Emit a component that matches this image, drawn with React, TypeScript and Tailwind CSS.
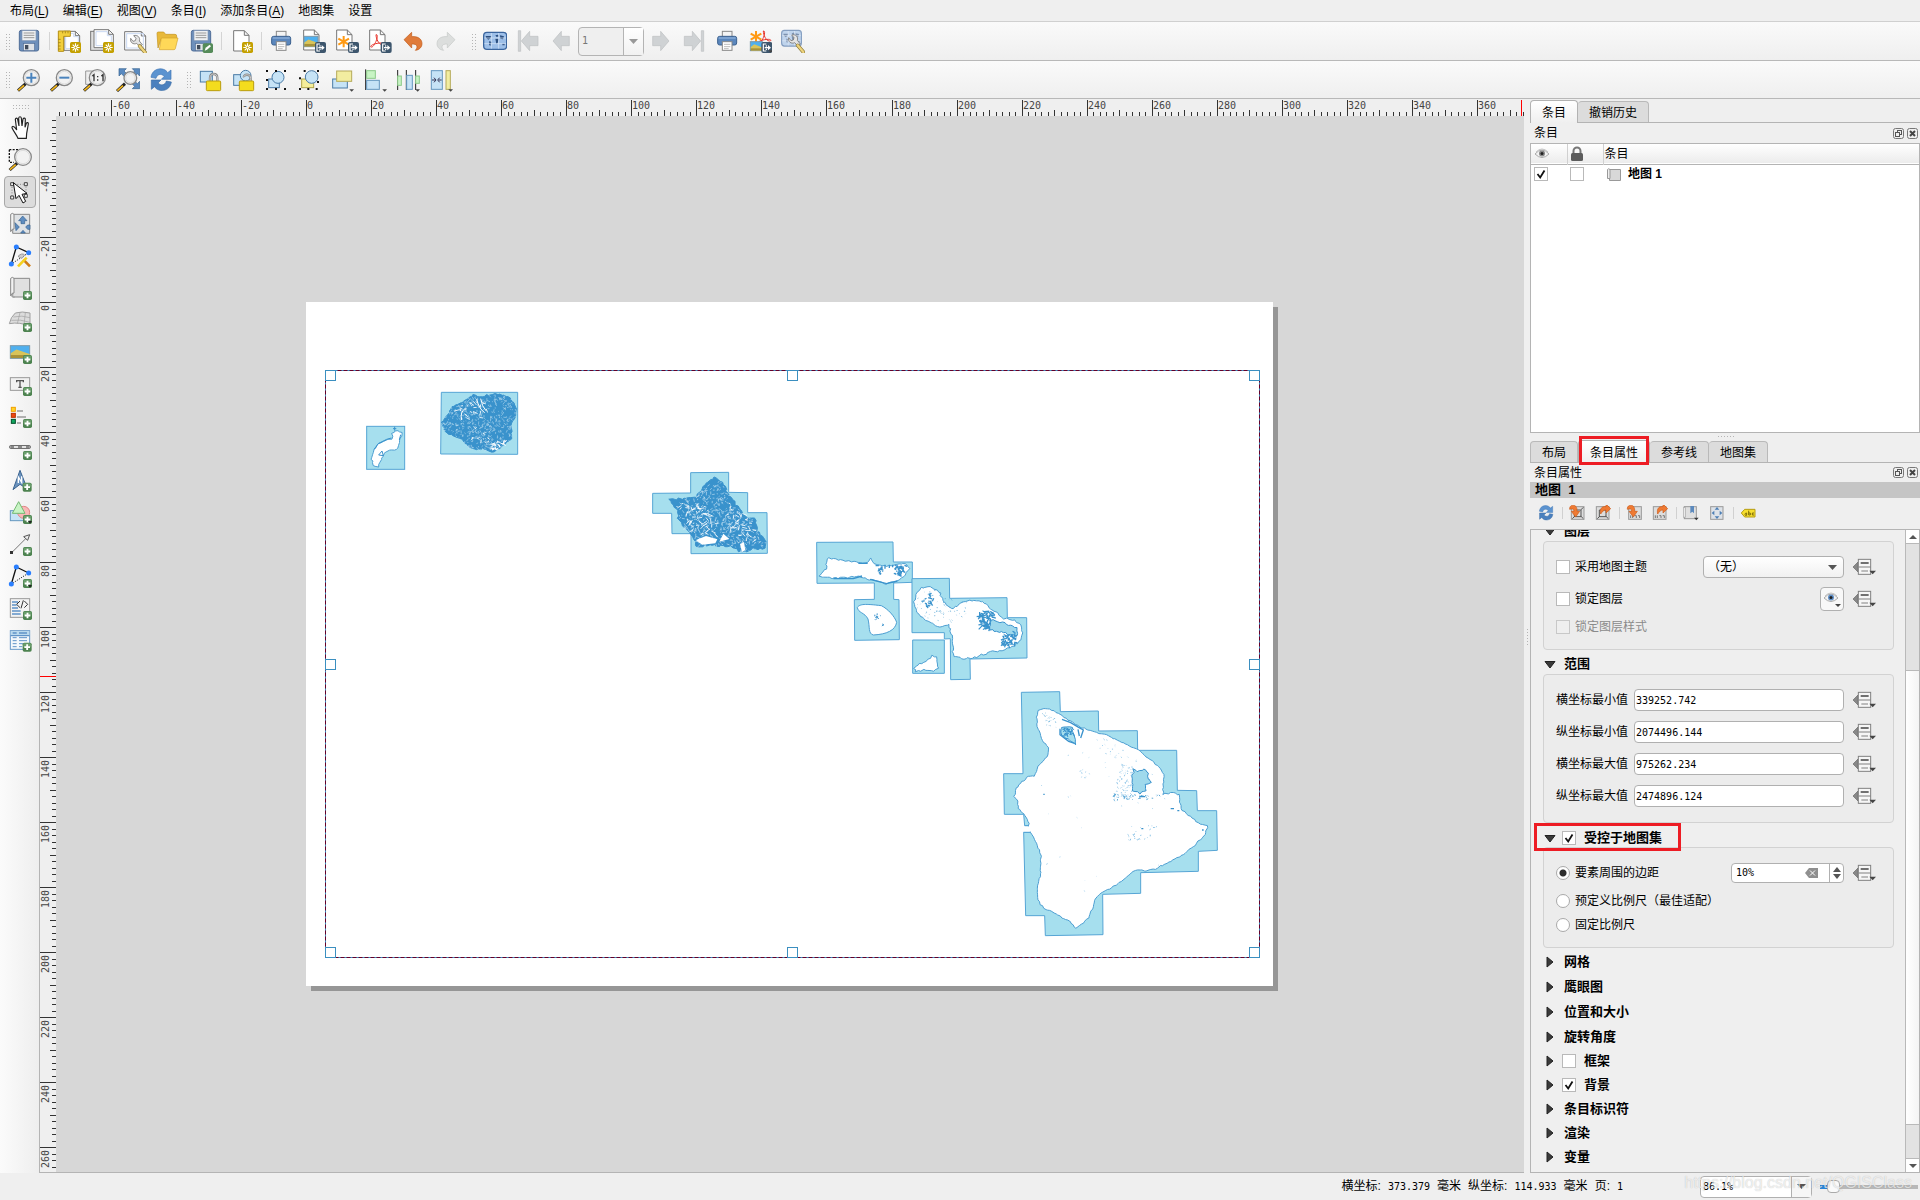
import React from 'react';

type Pt = [number, number];

/* ---------- helpers ---------- */

function makeRandom(seed: number) {
  let s = seed;
  return () => {
    s = (s * 1664525 + 1013904223) % 4294967296;
    return s / 4294967296;
  };
}

function parse(points: string): Pt[] {
  return points.trim().split(/\s+/).map((p) => p.split(',').map(Number) as Pt);
}

/* Breaks straight coast segments into short irregular ones. */
function coast(points: string, amp: number, seed: number): string {
  const rnd = makeRandom(seed);
  const pts = parse(points);
  const out: string[] = [];
  pts.forEach(([x, y], i) => {
    const [nx, ny] = pts[(i + 1) % pts.length];
    const len = Math.hypot(nx - x, ny - y);
    const steps = Math.max(1, Math.round(len / 7));
    for (let k = 0; k < steps; k++) {
      const t = k / steps;
      const dx = (rnd() - 0.5) * amp;
      const dy = (rnd() - 0.5) * amp;
      out.push(`${(x + (nx - x) * t + dx).toFixed(1)},${(y + (ny - y) * t + dy).toFixed(1)}`);
    }
  });
  return out.join(' ');
}

function inside(x: number, y: number, poly: Pt[]): boolean {
  let hit = false;
  for (let i = 0, j = poly.length - 1; i < poly.length; j = i++) {
    const [xi, yi] = poly[i];
    const [xj, yj] = poly[j];
    if (yi > y !== yj > y && x < ((xj - xi) * (y - yi)) / (yj - yi) + xi) hit = !hit;
  }
  return hit;
}

/* Short strokes scattered over the inside of a polygon. */
function strokesIn(points: string, count: number, size: number, seed: number): string {
  const rnd = makeRandom(seed);
  const poly = parse(points);
  const xs = poly.map((p) => p[0]);
  const ys = poly.map((p) => p[1]);
  const [x0, x1, y0, y1] = [Math.min(...xs), Math.max(...xs), Math.min(...ys), Math.max(...ys)];
  let d = '';
  for (let i = 0; i < count; i++) {
    const x = x0 + rnd() * (x1 - x0);
    const y = y0 + rnd() * (y1 - y0);
    const a = rnd() * 3.14;
    const l = size * (0.3 + rnd());
    if (inside(x, y, poly)) d += `M${x.toFixed(1)} ${y.toFixed(1)}l${(Math.cos(a) * l).toFixed(1)} ${(Math.sin(a) * l).toFixed(1)}`;
  }
  return d;
}

/* ---------- icons ---------- */

function Icon({ box, className = 'size-6', children }: { box: string; className?: string; children: React.ReactNode }) {
  return (
    <svg viewBox={box} className={`${className} shrink-0`} fill="none" aria-hidden="true">
      {children}
    </svg>
  );
}

const NewBadge = ({ x, y }: { x: number; y: number }) => (
  <g transform={`translate(${x} ${y})`}>
    <rect width="33" height="33" rx="5" fill="#c4a000" />
    <path d="M16.500 4v25M4 16.500h25M8 8l17 17M25 8L8 25" stroke="#fff" strokeWidth="3.500" />
    <circle cx="16.500" cy="16.500" r="5.500" fill="#fff" />
    <circle cx="16.500" cy="16.500" r="3" fill="#c4a000" />
  </g>
);

const ExportBadge = ({ x, y }: { x: number; y: number }) => (
  <g transform={`translate(${x} ${y})`}>
    <rect width="33" height="33" rx="6" fill="#3d566d" />
    <path d="M15 6H6v21h9M15 10v4M15 20v4" stroke="#fff" strokeWidth="3.500" />
    <path d="M10 17h12" stroke="#fff" strokeWidth="4" />
    <path d="M20 9l9 8-9 8z" fill="#fff" />
  </g>
);

const AddBadge = ({ x, y }: { x: number; y: number }) => (
  <g transform={`translate(${x} ${y})`}>
    <rect width="27" height="27" rx="5" fill="#4d8350" />
    <rect x="2" y="2" width="23" height="12" rx="3" fill="#6a9e6c" />
    <path d="M13.500 5v17M5 13.500h17" stroke="#fff" strokeWidth="5.500" />
  </g>
);

const Drop = ({ x, y }: { x: number; y: number }) => <path d={`M${x} ${y}h14l-7 7z`} fill="#444" />;

const Floppy = ({ x }: { x: number }) => (
  <g transform={`translate(${x} 0)`}>
    <rect x="7" y="91" width="58" height="62" rx="6" fill="#6d8fbb" stroke="#4f6d97" strokeWidth="3" />
    <rect x="15" y="92" width="42" height="30" fill="#eef0f2" stroke="#8296b3" strokeWidth="2" />
    <path d="M20 99h32M20 106h32M20 113h32" stroke="#999" strokeWidth="3" />
    <rect x="19" y="130" width="34" height="22" fill="#dfe3e8" stroke="#4f6d97" strokeWidth="2" />
    <rect x="24" y="135" width="10" height="13" fill="#3f4a5a" />
  </g>
);

const Printer = ({ x }: { x: number }) => (
  <g transform={`translate(${x} 0)`}>
    <rect x="22" y="94" width="29" height="18" fill="#f4f4f4" stroke="#888" strokeWidth="3" />
    <rect x="8" y="109" width="57" height="26" rx="6" fill="#5b87bd" stroke="#3c618f" strokeWidth="3" />
    <path d="M11 114h51" stroke="#8db0da" strokeWidth="4" />
    <rect x="22" y="125" width="29" height="26" fill="#fff" stroke="#888" strokeWidth="3" />
    <path d="M27 133h19M27 140h19M27 146h14" stroke="#999" strokeWidth="2" />
  </g>
);

const PageSheet = ({ x }: { x: number }) => (
  <path d={`M${x} 90h32l14 14v46h-46zM${x + 32} 90v14h14`} fill="#fff" stroke="#777" strokeWidth="3" />
);

const Lens = ({ cx, cy, r = 24 }: { cx: number; cy: number; r?: number }) => (
  <g>
    <path d={`M${cx - 16} ${cy + 17}L${cx - 40} ${cy + 39}`} stroke="#222" strokeWidth="9" />
    <path d={`M${cx - 22} ${cy + 23}L${cx - 39} ${cy + 38}`} stroke="#f5b81c" strokeWidth="5" />
    <circle cx={cx} cy={cy} r={r} fill="#f2f2f2" stroke="#888" strokeWidth="4" />
    <circle cx={cx} cy={cy} r={r - 5} stroke="#ddd" strokeWidth="3" />
  </g>
);

const RefreshShape = () => (
  <g>
    <path d="M453 232c4-30 40-32 50-14l10-8v28h-29l9-9c-10-10-22-6-25 6z" fill="#5b93d0" stroke="#3f76b5" strokeWidth="2" />
    <path d="M514 246c-4 30-40 32-50 14l-10 8v-28h29l-9 9c10 10 22 6 25-6z" fill="#4a80be" stroke="#3a6ca6" strokeWidth="2" />
  </g>
);

const Worldmap = ({ faded = false }: { faded?: boolean }) => (
  <g opacity={faded ? 0.6 : 1}>
    <rect x="101" y="97" width="69" height="51" rx="10" fill="#9dbfe8" stroke="#3a659e" strokeWidth="4" />
    <path d="M107 108h17l-3 7-6 4-7-6zM118 123l7 3-4 12-4-4zM136 106l8-2 3 5-7 2zM136 116h10l-3 13-4 3zM150 106l12 3-3 9-8-2zM157 131h7v5h-7z" fill="#2c4f80" />
    <path d="M103 114h65M103 131h65M124 99v47M146 99v47" stroke="#dbe8f8" strokeWidth="2" />
  </g>
);

const Wrench = ({ x, y }: { x: number; y: number }) => (
  <g transform={`translate(${x} ${y})`}>
    <path d="M0 8c-3 12 8 20 18 15l9 10 8-6-9-11C30 6 20-4 9 0l7 8-2 7-7 2z" fill="#e4e4e4" stroke="#777" strokeWidth="2.500" />
    <path d="M27 31l17 20" stroke="#8b7a38" strokeWidth="11" strokeLinecap="round" />
    <path d="M27 31l17 20" stroke="#eed37c" strokeWidth="7" strokeLinecap="round" />
  </g>
);

const MiniPicture = ({ x, y, w, h }: { x: number; y: number; w: number; h: number }) => (
  <g>
    <rect x={x} y={y} width={w} height={h} fill="#4fb0ef" stroke="#7d98a8" strokeWidth="3" />
    <path d={`M${x + 1} ${y + h * 0.6}l${w * 0.3}-${h * 0.3}l${w * 0.68} ${h * 0.35}v${h * 0.32}h-${w - 2}z`} fill="#d9c45a" />
    <rect x={x + 1} y={y + h * 0.74} width={w - 2} height={h * 0.24} fill="#a8923a" />
  </g>
);

const Asterisk = ({ x, y }: { x: number; y: number }) => (
  <path d={`M${x} ${y - 17}v34M${x - 16} ${y - 9}l32 18M${x + 16} ${y - 9}l-32 18`} stroke="#ff9a14" strokeWidth="6" />
);

const PdfCurve = ({ x, y }: { x: number; y: number }) => (
  <path
    d={`M${x} ${y}c6-2 4 12 0 20c-4 9-10 19-15 17c-5-4 12-12 30-12c10 0 9 6 3 5c-10-1-18-18-18-30z`}
    stroke="#e8332a"
    strokeWidth="3"
  />
);

/* ---------- small controls ---------- */

function Tool({ label, box, children }: { label: string; box: string; children: React.ReactNode }) {
  return (
    <button type="button" title={label} aria-label={label} className="mr-[9px] size-6 shrink-0">
      <Icon box={box}>{children}</Icon>
    </button>
  );
}

function SideTool({ label, box, children, active = false }: { label: string; box: string; children: React.ReactNode; active?: boolean }) {
  return (
    <button
      type="button"
      title={label}
      aria-label={label}
      aria-pressed={active}
      className={
        active
          ? 'flex size-8 shrink-0 items-center justify-center rounded-sm border border-[#a8a8a8] bg-[#dcdcdc]'
          : 'flex size-8 shrink-0 items-center justify-center'
      }
    >
      <Icon box={box}>{children}</Icon>
    </button>
  );
}

const Sep = () => <span className="-ml-px mr-[7px] h-[18px] w-px shrink-0 bg-[#d4d4d4]" />;
const Grip = ({ className }: { className: string }) => (
  <span className={`${className} h-[17px] w-[5px] shrink-0 bg-[radial-gradient(#b4b4b4_1px,transparent_1px)] bg-[length:3px_3px]`} />
);

function Check({ id, checked = false, disabled = false, label }: { id: string; checked?: boolean; disabled?: boolean; label?: string }) {
  return (
    <span className="relative block size-[14px] shrink-0">
      <input
        id={id}
        type="checkbox"
        defaultChecked={checked}
        disabled={disabled}
        aria-label={label}
        className="peer block size-[14px] appearance-none border border-[#b9b9b9] bg-white disabled:border-[#c8c8c8] disabled:bg-[#efefef]"
      />
      <svg viewBox="0 0 14 14" className="pointer-events-none absolute inset-0 hidden size-[14px] peer-checked:block" fill="none">
        <path d="M3.500 7l2.700 3.500L10.500 3.500" stroke="#111" strokeWidth="1.800" />
      </svg>
    </span>
  );
}

function Radio({ id, text, checked = false }: { id: string; text: string; checked?: boolean }) {
  return (
    <span className="flex items-center gap-[5px]">
      <input
        id={id}
        type="radio"
        name="atlas-scale"
        defaultChecked={checked}
        className="size-[14px] appearance-none rounded-full border border-[#a9a9a9] bg-white checked:bg-[radial-gradient(#2d2d2d_3px,#fff_4px)]"
      />
      <label htmlFor={id}>{text}</label>
    </span>
  );
}

const Override = () => (
  <button type="button" aria-label="数据定义覆盖" className="size-6 shrink-0">
    <Icon box="1056 375 72 72">
      <path d="M1074 396v30l-15-15z" fill="#888" stroke="#666" strokeWidth="2" />
      <rect x="1075" y="388" width="37" height="45" fill="#f6f6f6" stroke="#808080" strokeWidth="3" />
      <path d="M1082 399h24" stroke="#555" strokeWidth="5" />
      <path d="M1076 411h36M1084 423h20" stroke="#808080" strokeWidth="3" />
      <path d="M1108 422h20l-10 11z" fill="#444" />
    </Icon>
  </button>
);

const Down = () => <path d="M0 0h9l-4.500 5z" fill="#555" />;

function DockButtons() {
  return (
    <span className="ml-auto flex gap-[3px] pr-[2px]">
      <button type="button" aria-label="浮动" className="size-[11px]">
        <Icon box="0 0 11 11" className="size-[11px]">
          <rect x=".5" y=".5" width="10" height="10" rx="2" stroke="#777" />
          <rect x="4.500" y="2.500" width="4" height="4" stroke="#555" />
          <rect x="2.500" y="4.500" width="4" height="4" fill="#eee" stroke="#555" />
        </Icon>
      </button>
      <button type="button" aria-label="关闭" className="size-[11px]">
        <Icon box="0 0 11 11" className="size-[11px]">
          <rect x=".5" y=".5" width="10" height="10" rx="2" stroke="#777" />
          <path d="M3 3l5 5M8 3L3 8" stroke="#444" strokeWidth="2" />
        </Icon>
      </button>
    </span>
  );
}

function Tab({ text, active = false }: { text: string; active?: boolean }) {
  return (
    <button
      type="button"
      role="tab"
      aria-selected={active}
      className={
        active
          ? 'z-10 -mb-px h-[23px] rounded-t-sm border border-b-0 border-[#b2b2b2] bg-gradient-to-b from-white to-[#efefef] px-[11px] pt-px leading-4'
          : 'h-[21px] rounded-t-sm border border-b-0 border-l-0 border-[#b9b9b9] bg-[#dcdcdc] px-[11px] pt-[2px] leading-4 first:border-l'
      }
    >
      {text}
    </button>
  );
}

/* ---------- rulers and map ---------- */

const UNIT = 3.253;

function HorizontalRuler() {
  const ticks = [];
  for (let v = -76; v <= 374; v += 2) {
    const x = Math.round(250 + v * UNIT);
    const y = v % 20 === 0 ? 1 : v % 10 === 0 ? 11 : 13;
    ticks.push(<path key={v} d={`M${x + 0.5} ${y}V17`} stroke="#333" />);
    if (v % 20 === 0)
      ticks.push(
        <text key={`t${v}`} x={x + 1} y="10" fill="#444">
          {v}
        </text>,
      );
  }
  return (
    <svg className="h-[17px] min-w-0 flex-1 font-['DejaVu_Sans_Mono',monospace] text-[10px]" aria-hidden="true">
      {ticks}
      <path d="M1465.500 1V17" stroke="#f00" />
    </svg>
  );
}

function VerticalRuler() {
  const ticks = [];
  for (let v = -56; v <= 266; v += 2) {
    const y = Math.round(186 + v * 3.25);
    const x = v % 20 === 0 ? 0 : v % 10 === 0 ? 10 : 12;
    ticks.push(<path key={v} d={`M${x} ${y + 0.5}H16`} stroke="#333" />);
    if (v % 20 === 0)
      ticks.push(
        <text key={`t${v}`} transform={`translate(9 ${y + 3}) rotate(-90)`} textAnchor="end" fill="#444">
          {v}
        </text>,
      );
  }
  return (
    <svg className="h-full w-4 shrink-0 font-['DejaVu_Sans_Mono',monospace] text-[10px]" aria-hidden="true">
      {ticks}
      <path d="M0 560.500H16" stroke="#f00" />
    </svg>
  );
}

const KAUAI =
  '395,185 410,170 425,140 445,132 470,120 490,103 510,112 530,105 570,102 600,112 618,140 618,165 605,190 604,235 580,255 550,277 520,268 480,265 455,240 430,228 405,215';
const OAHU =
  '1078,420 1130,414 1160,410 1185,372 1212,353 1240,368 1252,398 1290,450 1310,472 1335,475 1340,505 1350,525 1370,545 1365,565 1330,568 1300,578 1260,560 1200,555 1160,562 1150,530 1120,500 1105,480 1103,450';
const HAWAII =
  '170,140 175,122 190,115 215,120 240,132 265,150 300,172 330,182 380,195 430,220 475,241 510,268 540,295 551,315 549,372 580,368 598,375 602,415 625,435 655,458 683,468 675,495 640,530 605,558 560,580 525,597 500,602 465,600 430,630 390,657 362,668 342,692 340,712 325,745 287,776 270,755 240,740 215,725 190,715 174,690 172,660 180,620 184,560 170,520 160,500 153,487 146,467 145,455 135,435 115,415 112,395 103,380 108,355 125,335 145,320 163,318 175,290 205,255 207,238 185,205 172,170';

function MapPage() {
  const sea = { fill: '#a6dfee', stroke: '#55a5d5', strokeWidth: 3 };
  const land = { fill: '#fff', stroke: '#4c9ed1', strokeWidth: 3, strokeLinejoin: 'round' as const };
  const ink = '#3992cc';
  return (
    <svg viewBox="306 302 967 684" className="size-full" role="img" aria-label="地图 1">
      <g transform="translate(310 360) scale(.33333)">
        <rect x="170" y="199" width="114" height="129" {...sea} />
        <polygon points={coast('246,220 256,211 278,216 272,234 264,264 240,272 225,278 213,300 205,320 190,315 185,298 192,270 206,250 230,240 246,236', 5, 3)} {...land} />
        <path d="M192 268l14-18 24-12 14-4M206 285l10-12 4 14zM254 200v12M249 206h10M268 240l4-16" stroke={ink} strokeWidth="3" fill="none" />
        <polygon points="394,97 623,97 623,283 392,282" {...sea} />
        <polygon points={coast(KAUAI, 5, 7)} fill={ink} stroke={ink} strokeWidth="3" />
        <path d={strokesIn(KAUAI, 620, 7, 11)} stroke="#c3e0f2" strokeWidth="1.600" fill="none" />
        <path d={strokesIn('440,140 520,108 540,180 470,180', 34, 13, 5)} stroke="#fff" strokeWidth="2.500" fill="none" />
        <path d={strokesIn('540,262 560,240 598,236 560,270', 50, 10, 6)} stroke="#fff" strokeWidth="3" fill="none" />
        <path d={strokesIn('480,195 540,190 540,250 480,240', 50, 6, 66)} stroke="#fff" strokeWidth="2" fill="none" />
        <path d="M500 118q8 30 24 40M512 116q4 24 16 36M455 180q-6-24 12-36" stroke="#fff" strokeWidth="3" fill="none" />
        <polygon
          points="1142,338 1256,337 1256,397 1313,398 1313,458 1371,458 1372,580 1143,581 1143,521 1086,521 1085,460 1028,460 1028,400 1142,399"
          {...sea}
        />
        <polygon points={coast(OAHU, 6, 9)} fill={ink} stroke={ink} strokeWidth="3" />
        <path d={strokesIn(OAHU, 800, 8, 21)} stroke="#cde6f5" strokeWidth="1.800" fill="none" />
        <path d={strokesIn('1108,430 1170,430 1240,470 1230,520 1150,520', 100, 13, 22)} stroke="#fff" strokeWidth="2.500" fill="none" />
        <path d={strokesIn('1250,420 1340,490 1340,545 1260,520', 60, 13, 23)} stroke="#fff" strokeWidth="2.500" fill="none" />
        <path d="M1158 540l30-12 34 10-6 12-40 4zM1228 545l12-24 18 16zM1290 552l12-6 4 24-10 6z" fill="#fff" />
      </g>
      <g transform="translate(790 520) scale(.33333)">
        <polygon points="80,67 309,66 310,126 367,126 367,187 311,189 311,238 327,239 328,359 194,361 193,239 253,238 253,189 81,190" {...sea} />
        <polygon points={coast('88,170 108,145 112,112 130,116 160,122 205,128 232,128 242,114 252,130 290,138 320,132 345,132 358,145 345,165 320,184 290,192 240,178 200,168 160,174 110,174', 5, 31)} {...land} />
        <path d={strokesIn('315,135 345,134 330,168 312,162', 60, 9, 32)} stroke={ink} strokeWidth="4" fill="none" />
        <path d={strokesIn('266,135 280,140 276,168 266,160', 16, 9, 34)} stroke={ink} strokeWidth="4" fill="none" />
        <path d="M130 176h60l26-8M240 178l50 13 32-8M205 130l28 0M285 134v12M298 134v10M308 134v8" stroke={ink} strokeWidth="4" fill="none" />
        <path d="M202 262c8-10 22-11 72-5c20 10 40 32 46 50c-4 24-30 36-70 38c-16-4-10-24-16-48c-10-20-30-18-32-35z" {...land} />
        <path d={strokesIn('250,275 275,275 285,320 258,320', 14, 6, 33)} stroke={ink} strokeWidth="3" fill="none" />
        <polygon points="366,176 478,175 479,235 651,233 652,293 710,293 711,414 540,417 541,478 482,479 481,356 463,357 463,338 366,338" {...sea} />
        <polygon points="368,360 463,360 463,460 368,460" {...sea} />
        <polygon
          points={coast('372,245 378,222 392,204 412,199 434,206 450,220 464,250 482,266 500,258 530,242 560,240 585,248 600,268 625,280 640,295 672,300 692,315 697,340 688,365 660,385 630,392 595,398 560,410 520,418 490,408 487,360 478,315 448,322 415,305 385,285', 6, 35)}
          {...land}
        />
        <path d={strokesIn('566,270 615,275 612,325 572,318', 130, 12, 36)} stroke={ink} strokeWidth="3.500" fill="none" />
        <polygon points={coast('605,300 650,312 682,322 684,345 655,342 600,328', 6, 37)} fill="#9ed8ec" stroke={ink} strokeWidth="3" />
        <path d={strokesIn('630,345 680,330 675,370 635,378', 90, 10, 38)} stroke={ink} strokeWidth="3.500" fill="none" />
        <path d={strokesIn('405,222 425,220 434,240 415,265 402,250', 26, 10, 39)} stroke={ink} strokeWidth="4" fill="none" />
        <path d={strokesIn('375,240 400,210 430,210 540,250 530,280 480,310 440,310 385,280', 110, 3, 40)} stroke="#5ba8d6" strokeWidth="2.500" fill="none" />
        <polygon points={coast('372,443 390,432 408,422 425,408 438,412 444,446 430,452 400,450 378,456', 5, 41)} {...land} />
      </g>
      <g transform="translate(980 670) scale(.33333)">
        <polygon
          points="124,67 239,65 241,125 355,123 356,183 472,182 473,241 590,241 592,361 650,362 652,422 710,422 712,541 655,544 655,604 482,608 482,670 368,673 369,794 196,797 194,737 137,737 131,487 153,487 146,467 134,467 131,433 73,433 71,311 129,311"
          {...sea}
        />
        <polygon points={coast(HAWAII, 4, 51)} {...land} />
        <path d="M132 469h22v16h-22z" fill="#fff" />
        <path d="M152 487h-21M134 467h12" stroke="#55a5d5" strokeWidth="3" />
        <polygon points={coast('246,170 275,172 282,200 288,222 262,208 242,190', 5, 52)} fill="#a6dfee" stroke={ink} strokeWidth="3" />
        <path d={strokesIn('250,172 280,175 282,196 252,192', 50, 8, 53)} stroke={ink} strokeWidth="3" fill="none" />
        <path d="M246 148l26 10 24 14 14 8-8 24M294 178l4 20M240 176v18l26 20 18 6" stroke={ink} strokeWidth="4" fill="none" />
        <polygon points={coast('460,298 478,304 492,296 502,305 503,325 515,340 498,344 496,362 478,370 458,362 456,335', 6, 54)} fill="#9fd9ec" stroke={ink} strokeWidth="3" />
        <path d={strokesIn('180,122 240,140 240,180 200,165', 30, 3, 55)} stroke="#5ba8d6" strokeWidth="2.500" fill="none" />
        <path d={strokesIn('330,190 400,215 470,270 450,290 390,270 340,220', 60, 3, 56)} stroke="#9cccea" strokeWidth="3" fill="none" />
        <path d={strokesIn('420,280 458,290 455,380 400,388', 120, 3, 57)} stroke="#8cc3e6" strokeWidth="3" fill="none" />
        <path d={strokesIn('396,372 540,374 530,386 400,388', 40, 6, 58)} stroke="#5ba8d6" strokeWidth="3" fill="none" />
        <path d={strokesIn('430,470 550,460 520,500 440,520', 40, 4, 59)} stroke="#8cc3e6" strokeWidth="3" fill="none" />
        <path d={strokesIn('130,200 560,300 560,600 200,700 150,420', 40, 3, 60)} stroke="#b4d9ef" strokeWidth="3" fill="none" />
        <path d={strokesIn('300,295 320,300 318,325 300,318', 20, 3, 61)} stroke="#9cccea" strokeWidth="2" fill="none" />
        <path d="M478 380h18M572 416h10M592 422h6M666 480h5M484 476h6M190 373h4" stroke={ink} strokeWidth="4" />
      </g>
      <rect x="325.500" y="370.500" width="934" height="587" fill="none" stroke="#3b8fc0" />
      <rect x="325.500" y="370.500" width="934" height="587" fill="none" stroke="#66002a" strokeDasharray="4 2" />
      {[325.5, 787.5, 1249.5].map((x) =>
        [370.5, 659.5, 947.5].map((y) =>
          x === 787.5 && y === 659.5 ? null : <rect key={`${x}-${y}`} x={x} y={y} width="10" height="10" fill="#fff" fillOpacity=".7" stroke="#3b8fc0" />,
        ),
      )}
    </svg>
  );
}

/* ---------- toolbars ---------- */

const MENUS = [
  ['布局', 'L'],
  ['编辑', 'E'],
  ['视图', 'V'],
  ['条目', 'I'],
  ['添加条目', 'A'],
  ['地图集', ''],
  ['设置', ''],
];

function MenuBar() {
  return (
    <nav className="flex h-[22px] shrink-0 items-center gap-[14px] border-b border-[#d0d0d0] pl-[10px]">
      {MENUS.map(([name, key]) => (
        <button key={name} type="button" className="leading-4">
          {name}
          {key && (
            <>
              (<u className="underline-offset-2">{key}</u>)
            </>
          )}
        </button>
      ))}
    </nav>
  );
}

function LayoutToolbar() {
  return (
    <div className="flex h-[39px] shrink-0 items-center border-b border-[#b8b8b8] bg-gradient-to-b from-[#fafafa] to-[#efefef]" role="toolbar" aria-label="布局">
      <Grip className="ml-[5px] mr-[7px]" />
      <Tool label="保存工程" box="51 87 72 72">
        <Floppy x={51} />
      </Tool>
      <Sep />
      <Tool label="新建布局" box="171 87 72 72">
        <path d="M192 94h34l13 13v44h-47zM226 94v13h13" fill="#fff" stroke="#777" strokeWidth="3" />
        <path d="M197 100h24v10h14v36h-38z" stroke="#c9d8f2" strokeWidth="3" />
        <path d="M175 93h36v16h-20v45h-16z" fill="#f2cf3c" stroke="#b58f12" strokeWidth="3" />
        <path d="M188 94v6M196 94v6M204 94v6M175 118h7M175 128h7M175 138h7M175 147h7" stroke="#8a6d10" strokeWidth="2" />
        <NewBadge x={210} y={126} />
      </Tool>
      <Tool label="复制布局" box="270 87 72 72">
        <rect x="272" y="94" width="50" height="57" fill="#e0e0e0" stroke="#777" strokeWidth="3" />
        <path d="M282 89h44l14 14v40h-58zM326 89v14h14" fill="#fff" stroke="#777" strokeWidth="3" />
        <path d="M288 95h34v12h12v30h-46z" stroke="#c9d8f2" strokeWidth="3" />
        <NewBadge x={309} y={126} />
      </Tool>
      <Tool label="布局管理器" box="369 87 72 72">
        <path d="M374 95h50l13 13v42h-63zM424 95v13h13" fill="#fff" stroke="#777" strokeWidth="3" />
        <rect x="380" y="101" width="50" height="43" stroke="#c9d8f2" strokeWidth="3" />
        <Wrench x={392} y={107} />
      </Tool>
      <Tool label="从模板添加条目" box="468 87 72 72">
        <path d="M471 100q0-4 4-4h16l6 7h28q5 0 5 5v8h-46l-10 28z" fill="#e8b93a" stroke="#c3921d" strokeWidth="2" />
        <path d="M484 114h50l-8 32q-1 3-4 3h-44z" fill="#ffd858" stroke="#d3a42c" strokeWidth="2" />
      </Tool>
      <Tool label="保存为模板" box="567 87 72 72">
        <Floppy x={567} />
        <rect x="608" y="130" width="31" height="29" rx="5" fill="#558b59" />
        <path d="M614 152l3-9 12-9 4 5-12 10z" fill="#fff" />
      </Tool>
      <Sep />
      <Tool label="添加页面" box="687 87 72 72">
        <path d="M701 92h32l14 14v47h-46zM733 92v14h14" fill="#fff" stroke="#777" strokeWidth="3" />
        <NewBadge x={726} y={126} />
      </Tool>
      <Sep />
      <Tool label="打印布局" box="807 87 72 72">
        <Printer x={807} />
      </Tool>
      <Tool label="导出为图片" box="906 87 72 72">
        <PageSheet x={911} />
        <MiniPicture x={912} y={109} w={42} h={31} />
        <ExportBadge x={945} y={126} />
      </Tool>
      <Tool label="导出为SVG" box="1005 87 72 72">
        <PageSheet x={1010} />
        <Asterisk x={1031} y={125} />
        <ExportBadge x={1044} y={126} />
      </Tool>
      <Tool label="导出为PDF" box="1104 87 72 72">
        <PageSheet x={1109} />
        <PdfCurve x={1128} y={104} />
        <ExportBadge x={1142} y={126} />
      </Tool>
      <Tool label="撤销" box="1203 87 72 72">
        <path d="M1212 119l23-22v13c20-2 31 8 31 21c0 10-8 19-20 20c8-8 8-20-11-19v12z" fill="#e07b3a" stroke="#c05a1a" strokeWidth="2" />
      </Tool>
      <Tool label="重做" box="1302 87 72 72">
        <path d="M1365 119l-23-22v13c-20-2-31 8-31 21c0 10 8 19 20 20c-8-8-8-20 11-19v12z" fill="#dcdedd" stroke="#c6c8c7" strokeWidth="2" />
      </Tool>
      <Grip className="ml-1 mr-[7px]" />
      <Tool label="预览地图集" box="99 87 72 72">
        <Worldmap />
      </Tool>
      <Tool label="第一个要素" box="198 87 72 72">
        <path d="M205 92h7v62h-7zM214 123l25-29v15h25v28h-25v15z" fill="#cfd2d4" stroke="#bcbfc1" strokeWidth="2" />
      </Tool>
      <Tool label="上一个要素" box="297 87 72 72">
        <path d="M309 123l25-29v15h24v28h-24v15z" fill="#cfd2d4" stroke="#bcbfc1" strokeWidth="2" />
      </Tool>
      <div className="-ml-1 mr-[5px] flex h-[29px] w-[66px] shrink-0 rounded-sm border border-[#b4b4b4] bg-[#efefef]">
        <input aria-label="地图集页码" defaultValue="1" className="w-0 min-w-0 flex-1 bg-transparent pl-[3px] font-['DejaVu_Sans_Mono',monospace] text-[10px] text-[#777]" />
        <button type="button" aria-label="选择页面" className="flex w-5 items-center justify-center border-l border-[#b4b4b4] bg-gradient-to-b from-white to-[#f1f1f1]">
          <Icon box="0 0 9 5" className="h-[5px] w-[9px]">
            <path d="M0 0h9l-4.500 5z" fill="#999" />
          </Icon>
        </button>
      </div>
      <Tool label="下一个要素" box="597 87 72 72">
        <path d="M657 123l-25-29v15h-24v28h24v15z" fill="#cfd2d4" stroke="#bcbfc1" strokeWidth="2" />
      </Tool>
      <Tool label="最后一个要素" box="696 87 72 72">
        <path d="M754 92h7v62h-7zM752 123l-25-29v15h-24v28h24v15z" fill="#cfd2d4" stroke="#bcbfc1" strokeWidth="2" />
      </Tool>
      <Tool label="打印地图集" box="795 87 72 72">
        <Printer x={795} />
      </Tool>
      <Tool label="导出地图集" box="894 87 72 72">
        <Asterisk x={918} y={110} />
        <PdfCurve x={940} y={93} />
        <MiniPicture x={901} y={125} w={36} h={27} />
        <ExportBadge x={934} y={126} />
        <Drop x={955} y={151} />
      </Tool>
      <Tool label="地图集设置" box="993 87 72 72">
        <g transform="translate(908 2) scale(.86 .92)">
          <Worldmap faded />
        </g>
        <Wrench x={1016} y={105} />
      </Tool>
    </div>
  );
}

function ActionsToolbar() {
  return (
    <div className="flex h-[38px] shrink-0 items-center border-b border-[#b8b8b8] bg-gradient-to-b from-[#fafafa] to-[#efefef]" role="toolbar" aria-label="操作">
      <Grip className="ml-[5px] mr-[7px]" />
      <Tool label="放大" box="51 204 72 72">
        <Lens cx={94} cy={233} />
        <path d="M94 218v30M79 233h30" stroke="#4a83bd" strokeWidth="6" />
      </Tool>
      <Tool label="缩小" box="150 204 72 72">
        <Lens cx={193} cy={233} />
        <path d="M178 233h30" stroke="#4a83bd" strokeWidth="6" />
      </Tool>
      <Tool label="缩放到100%" box="249 204 72 72">
        <path d="M257 213h40v40h-40z" fill="#eee" stroke="#999" strokeWidth="3" />
        <Lens cx={292} cy={233} />
        <path d="M277 228l5-4v20M304 228l5-4v20M293 228v4M293 238v4" stroke="#333" strokeWidth="4" />
      </Tool>
      <Tool label="缩放全图" box="348 204 72 72">
        <path d="M357 206h22l-7 7 8 8-8 8-8-8-7 7zM419 206v22l-7-7-8 8-8-8 8-8-7-7zM419 266h-22l7-7-8-8 8-8 8 8 7-7z" fill="#5a8ac0" stroke="#34608f" strokeWidth="2" />
        <Lens cx={391} cy={234} r={19} />
      </Tool>
      <Tool label="刷新视图" box="447 204 72 72">
        <RefreshShape />
      </Tool>
      <Grip className="ml-1 mr-[7px]" />
      <Tool label="锁定选中条目" box="594 204 72 72">
        <rect x="601" y="214" width="36" height="32" fill="#c6e3f6" stroke="#4a7ba6" strokeWidth="3" />
        <path d="M630 244v-10c0-16 22-16 22 0v10" stroke="#888" strokeWidth="7" />
        <path d="M630 244v-10c0-16 22-16 22 0v10" stroke="#ccc" strokeWidth="3" />
        <rect x="619" y="243" width="43" height="29" rx="3" fill="#f3dc1e" stroke="#b99c0e" strokeWidth="3" />
      </Tool>
      <Tool label="解锁全部条目" box="693 204 72 72">
        <rect x="701" y="224" width="30" height="32" fill="#c6e3f6" stroke="#4a7ba6" strokeWidth="3" />
        <circle cx="737" cy="227" r="16" fill="#c6e3f6" stroke="#4a7ba6" strokeWidth="3" />
        <path d="M732 232c-4-8 20-14 20 4v8" stroke="#888" strokeWidth="7" />
        <path d="M732 232c-4-8 20-14 20 4v8" stroke="#ccc" strokeWidth="3" />
        <rect x="718" y="243" width="43" height="29" rx="3" fill="#f3dc1e" stroke="#b99c0e" strokeWidth="3" />
      </Tool>
      <Tool label="组合" box="792 204 72 72">
        <rect x="806" y="237" width="32" height="26" fill="#c6e3f6" stroke="#4a7ba6" strokeWidth="3" />
        <circle cx="834" cy="232" r="18" fill="#c6e3f6" stroke="#4a7ba6" strokeWidth="3" />
        <path d="M798 210h6v6h-6zM825 210h6v6h-6zM852 210h6v6h-6zM798 237h6v6h-6zM798 264h6v6h-6zM825 264h6v6h-6zM852 264h6v6h-6z" fill="#111" />
      </Tool>
      <Tool label="取消组合" box="891 204 72 72">
        <rect x="905" y="237" width="36" height="26" fill="#f5ee9a" stroke="#b0a548" strokeWidth="3" />
        <circle cx="935" cy="231" r="19" fill="#c6e3f6" stroke="#4a7ba6" strokeWidth="3" />
        <path d="M911 210h6v6h-6zM951 210h6v6h-6zM897 232h6v6h-6zM951 243h6v6h-6zM897 264h6v6h-6zM922 264h6v6h-6zM947 264h6v6h-6z" fill="#111" />
      </Tool>
      <Tool label="置于上层" box="990 204 72 72">
        <rect x="998" y="237" width="44" height="27" fill="#c6e3f6" stroke="#4a7ba6" strokeWidth="3" />
        <rect x="1010" y="213" width="45" height="31" fill="#f2eda0" stroke="#b5aa5a" strokeWidth="3" />
        <Drop x={1048} y={268} />
      </Tool>
      <Tool label="对齐" box="1089 204 72 72">
        <path d="M1097 208v62" stroke="#222" strokeWidth="3" />
        <rect x="1100" y="212" width="26" height="23" fill="#c8f4c4" stroke="#8cc98a" strokeWidth="3" />
        <rect x="1100" y="241" width="38" height="27" fill="#c6e3f6" stroke="#6597bf" strokeWidth="3" />
        <Drop x={1147} y={268} />
      </Tool>
      <Tool label="分布" box="1188 204 72 72">
        <path d="M1193 210v60M1219 210v60M1247 210v60" stroke="#222" strokeWidth="3" />
        <rect x="1193" y="228" width="11" height="28" fill="#c8f4c4" stroke="#8cc98a" strokeWidth="3" />
        <rect x="1220" y="226" width="17" height="42" fill="#c6e3f6" stroke="#6597bf" strokeWidth="3" />
        <rect x="1247" y="228" width="11" height="22" fill="#c8f4c4" stroke="#8cc98a" strokeWidth="3" />
        <Drop x={1246} y={268} />
      </Tool>
      <Tool label="调整大小" box="1287 204 72 72">
        <rect x="1294" y="212" width="33" height="56" fill="#c6e3f6" stroke="#6597bf" strokeWidth="3" />
        <rect x="1338" y="212" width="13" height="56" fill="#f2eda0" stroke="#b5aa5a" strokeWidth="3" />
        <path d="M1296 240h9M1325 240h-9M1302 233l6 7-6 7M1319 233l-6 7 6 7" stroke="#335" strokeWidth="3" />
        <Drop x={1345} y={268} />
      </Tool>
    </div>
  );
}

function Toolbox() {
  return (
    <aside className="flex w-[39px] shrink-0 flex-col items-center bg-gradient-to-r from-[#fbfbfb] to-[#eeeeee] pl-px" aria-label="工具箱">
      <span className="mb-[2px] mt-[5px] h-[6px] w-[17px] bg-[radial-gradient(#b4b4b4_1px,transparent_1px)] bg-[length:3px_3px]" />
      <SideTool label="平移布局" box="24 63 72 72">
        <path d="M54 130c-3-8-14-22-18-32c0-5 6-6 12 4l2 3l-4-32c1-5 6-5 7 0l4 20l-1-24c1-5 7-5 8 0l2 24l3-21c2-4 7-3 7 1l-1 24l4-12c2-4 7-2 6 2l-5 28l-1 15z" fill="#fff" stroke="#222" strokeWidth="3.500" />
      </SideTool>
      <SideTool label="缩放" box="24 159 72 72">
        <path d="M28 164h34M28 164v38h14" stroke="#111" strokeWidth="4" strokeDasharray="6 4" />
        <Lens cx={69} cy={186} r={25} />
      </SideTool>
      <SideTool label="选择/移动条目" box="24 255 72 72" active>
        <path d="M36 268h42M36 268v40h42v-40" stroke="#888" strokeWidth="3" strokeDasharray="3 5" />
        <path d="M32 263h9v9h-9zM73 263h9v9h-9zM32 303h9v9h-9zM73 298h9v9h-9z" fill="#eee" stroke="#444" strokeWidth="3" />
        <path d="M40 263l8 48 9-10 12 23 8-5-11-21 15-3z" fill="#fff" stroke="#111" strokeWidth="3" />
      </SideTool>
      <SideTool label="移动条目内容" box="24 351 72 72">
        <path d="M40 358h49v57H38z" fill="#dfe2e5" stroke="#888" strokeWidth="3" />
        <path d="M32 358q5-6 10 0v44q-6-2-10 8z" fill="#f2f2f2" stroke="#888" strokeWidth="3" />
        <path d="M68 363l13 14h-7v9H63v-9h-7zM45 383l13 13-10 11zM90 390h-7l-6 6 6 7h7zM62 414l7-8 7 8z" fill="#5f8dc0" stroke="#35608f" strokeWidth="2" />
      </SideTool>
      <SideTool label="编辑节点" box="24 447 72 72">
        <path d="M49 456L34 507M49 456l37 17" stroke="#111" strokeWidth="4" />
        <path d="M34 507l52-34" stroke="#111" strokeWidth="3" strokeDasharray="3 4" />
        <circle cx="49" cy="456" r="7.500" fill="#2a7fff" />
        <circle cx="86" cy="473" r="7.500" fill="#2a7fff" />
        <circle cx="34" cy="507" r="7.500" fill="#2a7fff" />
        <path d="M54 484q12-12 20-4l-8 10q-8-2-12-6z" fill="#ccc" stroke="#777" strokeWidth="2" />
        <path d="M70 494l20 20" stroke="#cf7c16" strokeWidth="8" />
        <path d="M80 488l-26 26" stroke="#f5d11f" strokeWidth="8" />
      </SideTool>
      <SideTool label="添加地图" box="24 543 72 72">
        <path d="M40 550h49v56H38z" fill="#e0e0e0" stroke="#888" strokeWidth="3" />
        <path d="M32 550q5-6 10 0v44q-6-2-10 8zM32 600q4 8 12 6" fill="#f2f2f2" stroke="#888" strokeWidth="3" />
        <AddBadge x={69} y={588} />
      </SideTool>
      <SideTool label="添加3D地图" box="24 639 72 72">
        <path d="M46 654q20-6 44 0v40q-30-14-62-8q4-20 18-32z" fill="#dcdcdc" stroke="#a0a0a0" strokeWidth="3" />
        <path d="M40 666q26-6 50 2M34 676q26-4 56 6M60 653l-8 33M76 653l-4 37" stroke="#a0a0a0" strokeWidth="2" />
        <AddBadge x={69} y={684} />
      </SideTool>
      <SideTool label="添加图片" box="24 735 72 72">
        <MiniPicture x={31} y={752} w={58} h={38} />
        <AddBadge x={69} y={780} />
      </SideTool>
      <SideTool label="添加标注" box="24 -9 72 72">
        <rect x="31" y="8" width="58" height="38" fill="#f1f1f1" stroke="#999" strokeWidth="3" />
        <path d="M50 22v-5h20v5M60 17v19M55 37h10" stroke="#555" strokeWidth="4" />
        <AddBadge x={69} y={36} />
      </SideTool>
      <SideTool label="添加图例" box="24 87 72 72">
        <rect x="34" y="97" width="12" height="12" fill="#ffd42a" stroke="#f0a000" strokeWidth="3" />
        <rect x="34" y="115" width="12" height="12" fill="#f04a10" stroke="#b83000" strokeWidth="3" />
        <rect x="34" y="133" width="12" height="12" fill="#10a860" stroke="#004d28" strokeWidth="3" />
        <path d="M51 108h18M51 126h27M51 144h12" stroke="#999" strokeWidth="5" />
        <AddBadge x={69} y={132} />
      </SideTool>
      <SideTool label="添加比例尺" box="24 183 72 72">
        <rect x="29" y="212" width="62" height="8" rx="2" fill="#fff" stroke="#555" strokeWidth="3" />
        <path d="M31 216h11M54 216h12M78 216h11" stroke="#888" strokeWidth="6" />
        <AddBadge x={69} y={228} />
      </SideTool>
      <SideTool label="添加指北针" box="24 279 72 72">
        <path d="M60 286l22 56-22-14-21 16z" fill="#6b93bf" stroke="#3b6490" strokeWidth="3" />
        <path d="M55 324v-18l10 16v-18" stroke="#fff" strokeWidth="4" />
        <AddBadge x={68} y={323} />
      </SideTool>
      <SideTool label="添加形状" box="24 375 72 72">
        <rect x="31" y="407" width="40" height="30" fill="#c6e3f6" stroke="#6597bf" strokeWidth="3" />
        <circle cx="71" cy="412" r="18" fill="#f9b7b7" stroke="#e08686" strokeWidth="3" />
        <path d="M56 380l19 35H37z" fill="#c8f4c4" stroke="#74b872" strokeWidth="3" />
        <AddBadge x={69} y={420} />
        <path d="M84 438h12l-6 8z" fill="#222" />
      </SideTool>
      <SideTool label="添加箭头" box="24 471 72 72">
        <path d="M36 532l40-40" stroke="#777" strokeWidth="3" />
        <path d="M30 528h9v9h-9z" fill="#333" />
        <path d="M89 479l-18 6 12 11z" fill="#eee" stroke="#555" strokeWidth="3" />
        <AddBadge x={69} y={516} />
      </SideTool>
      <SideTool label="添加节点条目" box="24 567 72 72">
        <path d="M49 576L34 627M49 576l37 18" stroke="#111" strokeWidth="4" />
        <path d="M34 627l52-33" stroke="#111" strokeWidth="3" strokeDasharray="3 4" />
        <circle cx="49" cy="576" r="7.500" fill="#2a7fff" />
        <circle cx="86" cy="594" r="7.500" fill="#2a7fff" />
        <circle cx="34" cy="627" r="7.500" fill="#2a7fff" />
        <AddBadge x={69} y={612} />
        <path d="M84 630h12l-6 8z" fill="#222" />
      </SideTool>
      <SideTool label="添加HTML" box="24 663 72 72">
        <rect x="31" y="671" width="58" height="56" fill="#f3f3f3" stroke="#999" strokeWidth="3" />
        <path d="M36 681h18M36 690h14M36 699h18M36 708h26M36 717h26" stroke="#5f93c8" strokeWidth="5" />
        <path d="M60 678l-10 10 10 10M73 678l10 10-10 10M70 676l-7 24" stroke="#333" strokeWidth="3" />
        <AddBadge x={69} y={708} />
      </SideTool>
      <SideTool label="添加属性表" box="24 759 72 72">
        <rect x="31" y="767" width="58" height="56" fill="#f3f8fc" stroke="#6597c8" strokeWidth="3" />
        <path d="M32 774h56" stroke="#b9d9ee" strokeWidth="12" />
        <path d="M38 774h12M57 774h24M32 782h56" stroke="#5f93c8" strokeWidth="4" />
        <path d="M38 788h12M57 788h24M38 797h12M57 797h24M38 806h12M57 806h12M38 815h12M57 815h10" stroke="#5f93c8" strokeWidth="3" />
        <AddBadge x={68} y={803} />
      </SideTool>
    </aside>
  );
}

/* ---------- docks ---------- */

function Eye({ blue = false }: { blue?: boolean }) {
  return (
    <g>
      <path d="M1 7q7-8 14 0q-7 7-14 0z" fill="#f3f3f3" stroke="#aaa" />
      <path d="M2 5q6-6 12 0" stroke="#c4c4c4" />
      <circle cx="8" cy="6.500" r="3" fill={blue ? '#5f8fc8' : '#888'} />
      <circle cx="8" cy="6.500" r="1.500" fill="#222" />
    </g>
  );
}

function ItemsDock() {
  return (
    <section>
      <div className="flex h-6 items-end border-b border-[#b4b4b4]" role="tablist">
        <Tab text="条目" active />
        <Tab text="撤销历史" />
      </div>
      <header className="flex h-5 items-center pl-1">
        条目
        <DockButtons />
      </header>
      <div className="h-[290px] border border-[#b4b4b4] bg-white">
        <table className="w-full border-collapse text-left">
          <thead>
            <tr className="h-5 border-b border-[#b4b4b4] bg-gradient-to-b from-white to-[#ececec]">
              <th className="w-9 border-r border-[#d0d0d0] pl-[3px]" aria-label="可见">
                <Icon box="0 0 16 14" className="h-[14px] w-4">
                  <Eye />
                </Icon>
              </th>
              <th className="w-9 border-r border-[#d0d0d0] pl-[3px]" aria-label="锁定">
                <Icon box="0 0 12 15" className="h-[15px] w-3">
                  <path d="M2.500 8V5a3.500 3.500 0 0 1 7 0v3" stroke="#777" strokeWidth="2" />
                  <rect y="7" width="12" height="8" rx="1.500" fill="#5c5c5c" />
                </Icon>
              </th>
              <th className="pl-px font-normal leading-4">条目</th>
            </tr>
          </thead>
          <tbody>
            <tr className="h-5">
              <td className="pl-[3px]">
                <Check id="item-visible" label="可见" checked />
              </td>
              <td className="pl-[3px]">
                <Check id="item-locked" label="锁定" />
              </td>
              <td>
                <span className="flex items-center gap-[7px] pl-1 font-bold leading-4">
                  <Icon box="0 0 14 13" className="h-[13px] w-[14px]">
                    <path d="M2.500 1.500h11v11h-11z" fill="#d8d8d8" stroke="#999" />
                    <path d="M.5 1.500q1-1.500 2.500 0v9H.5z" fill="#eee" stroke="#999" />
                  </Icon>
                  地图 1
                </span>
              </td>
            </tr>
          </tbody>
        </table>
      </div>
    </section>
  );
}

const PSep = () => <span className="-ml-[2px] mr-[6px] h-3 w-px shrink-0 bg-[#d0d0d0]" />;

function PropTool({ label, box, children }: { label: string; box: string; children: React.ReactNode }) {
  return (
    <button type="button" title={label} aria-label={label} className="mr-[10px] size-4 shrink-0">
      <Icon box={box} className="size-4">
        {children}
      </Icon>
    </button>
  );
}

const Frame = ({ x, digits = false }: { x: number; digits?: boolean }) => (
  <g>
    <rect x={x} y="230" width="38" height="38" fill="#ddd" stroke="#999" strokeWidth="3" />
    {digits ? (
      <path d={`M${x + 6} 256v8M${x + 12} 256v8M${x + 18} 257h5v7M${x + 28} 257h5v7`} stroke="#777" strokeWidth="3" />
    ) : (
      <path d={`M${x + 9} 240h20v20h-20zM${x + 3} 266l8-8M${x + 36} 266l-8-8M${x + 36} 232l-7 7`} stroke="#555" strokeWidth="3" />
    )}
  </g>
);

function PropertyToolbar() {
  const arrowIn = 'c-2-16 22-18 22 2v4h8l-12 17-13-17h8c1-8-5-8-13-6z';
  const arrowOut = 'c-4-18 6-24 16-22v-8l14 14-14 13v-9c-8 0-10 4-16 12z';
  return (
    <div className="flex h-[31px] items-center pb-px pl-2" role="toolbar" aria-label="地图工具">
      <PropTool label="更新预览" box="447 204 72 72">
        <RefreshShape />
      </PropTool>
      <PSep />
      <PropTool label="设置范围为主画布" box="208 225 48 48">
        <Frame x={215} />
        <path d={`M210 238${arrowIn}`} fill="#ef7a33" stroke="#cc5b18" strokeWidth="2" />
      </PropTool>
      <PropTool label="在主画布中查看范围" box="286 225 48 48">
        <Frame x={290} />
        <path d={`M303 252${arrowOut}`} fill="#ef7a33" stroke="#cc5b18" strokeWidth="2" />
      </PropTool>
      <PSep />
      <PropTool label="设置比例为主画布" box="379 225 48 48">
        <Frame x={387} digits />
        <path d={`M383 238${arrowIn}`} fill="#ef7a33" stroke="#cc5b18" strokeWidth="2" />
      </PropTool>
      <PropTool label="设置主画布比例" box="457 225 48 48">
        <Frame x={461} digits />
        <path d={`M474 252${arrowOut}`} fill="#ef7a33" stroke="#cc5b18" strokeWidth="2" />
      </PropTool>
      <PSep />
      <PropTool label="书签" box="556 225 48 48">
        <rect x="560" y="230" width="36" height="36" fill="#e0e0e0" stroke="#999" strokeWidth="3" />
        <path d="M557 232h6v30h-6z" fill="#f5f5f5" stroke="#999" strokeWidth="2" />
        <path d="M578 228h11v22l-5-5-6 5z" fill="#5b89bd" />
        <path d="M589 263h14l-7 8z" fill="#333" />
      </PropTool>
      <PropTool label="交互式编辑范围" box="630 225 48 48">
        <rect x="635" y="230" width="37" height="38" fill="#dde2e8" stroke="#999" strokeWidth="3" />
        <path d="M654 231l7 8h-14zM654 267l7-8h-14zM638 249l8-7v14zM670 249l-8-7v14z" fill="#4d7fb5" />
      </PropTool>
      <PSep />
      <PropTool label="标注设置" box="723 225 48 48">
        <path d="M727 249l10-11h31v23h-31z" fill="#f7df2e" stroke="#b59c12" strokeWidth="3" />
        <path d="M738 253q0-4 5-4v7h-4zM749 242v13h5v-6h-5M765 249h-5v6h5" stroke="#6b5a00" strokeWidth="2.500" />
      </PropTool>
    </div>
  );
}

function Triangle({ open }: { open: boolean }) {
  return (
    <Icon box="0 0 12 12" className="size-3">
      {open ? <path d="M1 3.500h10L6 10z" fill="#3a3a3a" stroke="#222" /> : <path d="M3 1v10L9 6z" fill="#3a3a3a" stroke="#222" />}
    </Icon>
  );
}

function GroupTitle({ text, open = false, check, id, className }: { text: string; open?: boolean; check?: boolean; id?: string; className: string }) {
  return (
    <div className={`${className} flex items-center pl-[13px] text-[13px] font-bold leading-5`}>
      <button type="button" aria-expanded={open} aria-label={`展开 ${text}`} className="size-3">
        <Triangle open={open} />
      </button>
      {id ? (
        <>
          <span className="ml-[6px] mr-2 flex">
            <Check id={id} checked={check} />
          </span>
          <label htmlFor={id}>{text}</label>
        </>
      ) : (
        <h3 className="ml-2">{text}</h3>
      )}
    </div>
  );
}

const Group = ({ children }: { children: React.ReactNode }) => (
  <div className="ml-3 mr-[11px] flex flex-col gap-2 rounded-sm border border-[#d2d2d2] bg-[#ececec] pb-[14px] pl-3 pr-[17px] pt-[13px] leading-4">{children}</div>
);

const EXTENT = [
  ['xmin', '横坐标最小值', '339252.742'],
  ['ymin', '纵坐标最小值', '2074496.144'],
  ['xmax', '横坐标最大值', '975262.234'],
  ['ymax', '纵坐标最大值', '2474896.124'],
];

function PropertiesDock() {
  return (
    <section className="flex min-h-0 flex-1 flex-col">
      <div className="relative flex h-6 items-end border-b border-[#b4b4b4]" role="tablist">
        <Tab text="布局" />
        <Tab text="条目属性" active />
        <Tab text="参考线" />
        <Tab text="地图集" />
        <span className="pointer-events-none absolute -top-[3px] left-[49px] z-20 h-[29px] w-[70px] border-[3px] border-[#ed1c24]" />
      </div>
      <header className="flex h-[19px] items-center pl-1">
        条目属性
        <DockButtons />
      </header>
      <h2 className="h-4 whitespace-pre bg-[#c5c5c5] pl-[5px] text-[13px] font-bold leading-4">地图  1</h2>
      <PropertyToolbar />
      <div className="flex min-h-0 flex-1 border border-[#b4b4b4]">
        <div className="min-w-0 flex-1 overflow-hidden">
          <GroupTitle text="图层" open className="-mt-[9px] h-5" />
          <Group>
            <div className="flex h-6 items-center">
              <Check id="theme" />
              <label htmlFor="theme" className="ml-[5px]">
                采用地图主题
              </label>
              <span className="relative ml-auto mr-2 w-[141px]">
                <select aria-label="地图主题" className="h-[22px] w-full appearance-none rounded-sm border border-[#b0b0b0] bg-gradient-to-b from-white to-[#f1f1f1] pl-1 leading-4">
                  <option>（无）</option>
                </select>
                <svg viewBox="0 0 9 5" className="pointer-events-none absolute right-[7px] top-[9px] h-[5px] w-[9px]">
                  <Down />
                </svg>
              </span>
              <Override />
            </div>
            <div className="flex h-6 items-center">
              <Check id="lock-layers" />
              <label htmlFor="lock-layers" className="ml-[5px]">
                锁定图层
              </label>
              <button type="button" aria-label="可见性预设" className="ml-auto mr-2 flex size-6 items-center justify-center rounded-sm border border-[#b0b0b0] bg-[#f8f8f8]">
                <Icon box="0 0 18 18" className="size-[18px]">
                  <g transform="translate(0 1)">
                    <Eye blue />
                  </g>
                  <path d="M12 14h6l-3 3z" fill="#444" />
                </Icon>
              </button>
              <Override />
            </div>
            <div className="flex h-4 items-center text-[#8a8a8a]">
              <Check id="lock-styles" disabled />
              <label htmlFor="lock-styles" className="ml-[5px]">
                锁定图层样式
              </label>
            </div>
          </Group>
          <GroupTitle text="范围" open className="h-6 pt-1" />
          <Group>
            {EXTENT.map(([id, label, value]) => (
              <div key={id} className="flex h-6 items-center">
                <label htmlFor={id} className="mr-[6px] shrink-0">
                  {label}
                </label>
                <input
                  id={id}
                  defaultValue={value}
                  className="mr-2 h-[22px] min-w-0 flex-1 rounded-sm border border-[#b0b0b0] bg-white px-px font-['DejaVu_Sans_Mono',monospace] text-[10px]"
                />
                <Override />
              </div>
            ))}
          </Group>
          <div className="relative">
            <GroupTitle text="受控于地图集" open check id="atlas" className="h-6 pt-[6px]" />
            <span className="pointer-events-none absolute left-[3px] top-0 z-10 h-7 w-[147px] border-[3px] border-[#ed1c24]" />
          </div>
          <Group>
            <div className="flex h-6 items-center">
              <Radio id="margin" text="要素周围的边距" checked />
              <span className="ml-auto mr-2 flex h-5 w-[113px] rounded-sm border border-[#b0b0b0] bg-white">
                <input aria-label="边距" defaultValue="10%" className="min-w-0 flex-1 pl-1 font-['DejaVu_Sans_Mono',monospace] text-[10px]" />
                <button type="button" aria-label="清除" className="mr-[11px]">
                  <Icon box="0 0 13 10" className="h-[10px] w-[13px]">
                    <path d="M0 5l4-5h9v10H4z" fill="#8f8f8f" />
                    <path d="M5 2.500l5 5M10 2.500l-5 5" stroke="#fff" />
                  </Icon>
                </button>
                <span className="flex w-[14px] flex-col items-center justify-center gap-[2px] border-l border-[#b0b0b0]">
                  <button type="button" aria-label="增加" className="h-[5px] w-2">
                    <Icon box="0 0 8 5" className="h-[5px] w-2">
                      <path d="M0 5h8L4 0z" fill="#555" />
                    </Icon>
                  </button>
                  <button type="button" aria-label="减少" className="h-[5px] w-2">
                    <Icon box="0 0 8 5" className="h-[5px] w-2">
                      <path d="M0 0h8L4 5z" fill="#555" />
                    </Icon>
                  </button>
                </span>
              </span>
              <Override />
            </div>
            <Radio id="predefined" text="预定义比例尺（最佳适配）" />
            <Radio id="fixed" text="固定比例尺" />
          </Group>
          <div className="pt-px">
            {['网格', '鹰眼图', '位置和大小', '旋转角度'].map((t) => (
              <GroupTitle key={t} text={t} className="h-[25px]" />
            ))}
            <GroupTitle text="框架" id="frame" className="h-6" />
            <GroupTitle text="背景" id="background" check className="h-6" />
            {['条目标识符', '渲染', '变量'].map((t) => (
              <GroupTitle key={t} text={t} className="h-6" />
            ))}
          </div>
        </div>
        <div className="flex w-[14px] shrink-0 flex-col border-l border-[#b9b9b9] bg-[#e2e2e2]" aria-hidden="true">
          <span className="flex h-[14px] items-center justify-center border-b border-[#b9b9b9] bg-white">
            <svg viewBox="0 0 8 4" className="h-1 w-2">
              <path d="M0 4h8L4 0z" fill="#555" />
            </svg>
          </span>
          <span className="flex-[127]" />
          <span className="flex-[455] border-y border-[#b9b9b9] bg-gradient-to-r from-white to-[#f4f4f4]" />
          <span className="flex-[33]" />
          <span className="flex h-[14px] items-center justify-center border-t border-[#b9b9b9] bg-white">
            <svg viewBox="0 0 8 4" className="h-1 w-2">
              <path d="M0 0h8L4 4z" fill="#555" />
            </svg>
          </span>
        </div>
      </div>
    </section>
  );
}

const Num = ({ children }: { children: React.ReactNode }) => <span className="font-['DejaVu_Sans_Mono',monospace] text-[10px]">{children}</span>;

function StatusBar() {
  return (
    <footer className="relative flex h-[27px] shrink-0 items-center justify-end">
      <p className="mr-[77px] flex items-baseline gap-[7px] leading-4">
        <span>横坐标:</span>
        <Num>373.379</Num>
        <span>毫米</span>
        <span>纵坐标:</span>
        <Num>114.933</Num>
        <span>毫米</span>
        <span>页:</span>
        <Num>1</Num>
      </p>
      <div className="mr-2 flex h-[22px] w-[112px] rounded-sm border border-[#b0b0b0] bg-white">
        <input aria-label="缩放比例" defaultValue="86.1%" className="w-0 min-w-0 flex-1 pl-[2px] font-['DejaVu_Sans_Mono',monospace] text-[10px]" />
        <button type="button" aria-label="选择缩放比例" className="flex w-5 items-center justify-center border-l border-[#b0b0b0] bg-[#f6f6f6]">
          <Icon box="0 0 9 5" className="h-[5px] w-[9px]">
            <Down />
          </Icon>
        </button>
      </div>
      <input
        type="range"
        aria-label="缩放"
        defaultValue="8"
        className="mr-[2px] h-[14px] w-[98px] appearance-none bg-[linear-gradient(#2a86d8,#2a86d8),linear-gradient(#b8b8b8,#b8b8b8)] bg-[length:9px_4px,100%_4px] bg-[position:left_center,center] bg-no-repeat [&::-webkit-slider-thumb]:size-[13px] [&::-webkit-slider-thumb]:appearance-none [&::-webkit-slider-thumb]:rounded-sm [&::-webkit-slider-thumb]:border [&::-webkit-slider-thumb]:border-[#aaa] [&::-webkit-slider-thumb]:bg-[#fafafa]"
      />
      <span className="pointer-events-none absolute right-2 top-0 font-['Liberation_Sans',sans-serif] text-base leading-5 text-white/70 [text-shadow:0_0_1px_rgba(0,0,0,0.25)]">
        https://blog.csdn.net/QGISClass
      </span>
    </footer>
  );
}

export default function App() {
  return (
    <div className="flex h-screen flex-col overflow-hidden bg-[#efefef] font-['Liberation_Sans','Noto_Sans_CJK_SC',sans-serif] text-xs text-black">
      <MenuBar />
      <LayoutToolbar />
      <ActionsToolbar />
      <main className="flex min-h-0 flex-1">
        <Toolbox />
        <div className="flex min-w-0 flex-1 flex-col border-b border-l border-[#b4b4b4]">
          <div className="flex h-[17px] shrink-0 pl-4">
            <HorizontalRuler />
          </div>
          <div className="flex min-h-0 flex-1">
            <VerticalRuler />
            <div className="relative min-w-0 flex-1 overflow-hidden bg-[#d7d7d7]">
              <div className="absolute left-[250px] top-[186px] h-[684px] w-[967px] bg-white shadow-[5px_5px_0_#969696]">
                <MapPage />
              </div>
            </div>
          </div>
        </div>
        <div className="flex w-[6px] shrink-0 items-center justify-center">
          <span className="h-[17px] w-[3px] bg-[radial-gradient(#b4b4b4_1px,transparent_1px)] bg-[length:3px_3px]" />
        </div>
        <div className="flex w-[390px] shrink-0 flex-col">
          <ItemsDock />
          <div className="flex h-[6px] shrink-0 items-center justify-center">
            <span className="h-[3px] w-[17px] bg-[radial-gradient(#b4b4b4_1px,transparent_1px)] bg-[length:3px_3px]" />
          </div>
          <PropertiesDock />
        </div>
      </main>
      <StatusBar />
    </div>
  );
}
